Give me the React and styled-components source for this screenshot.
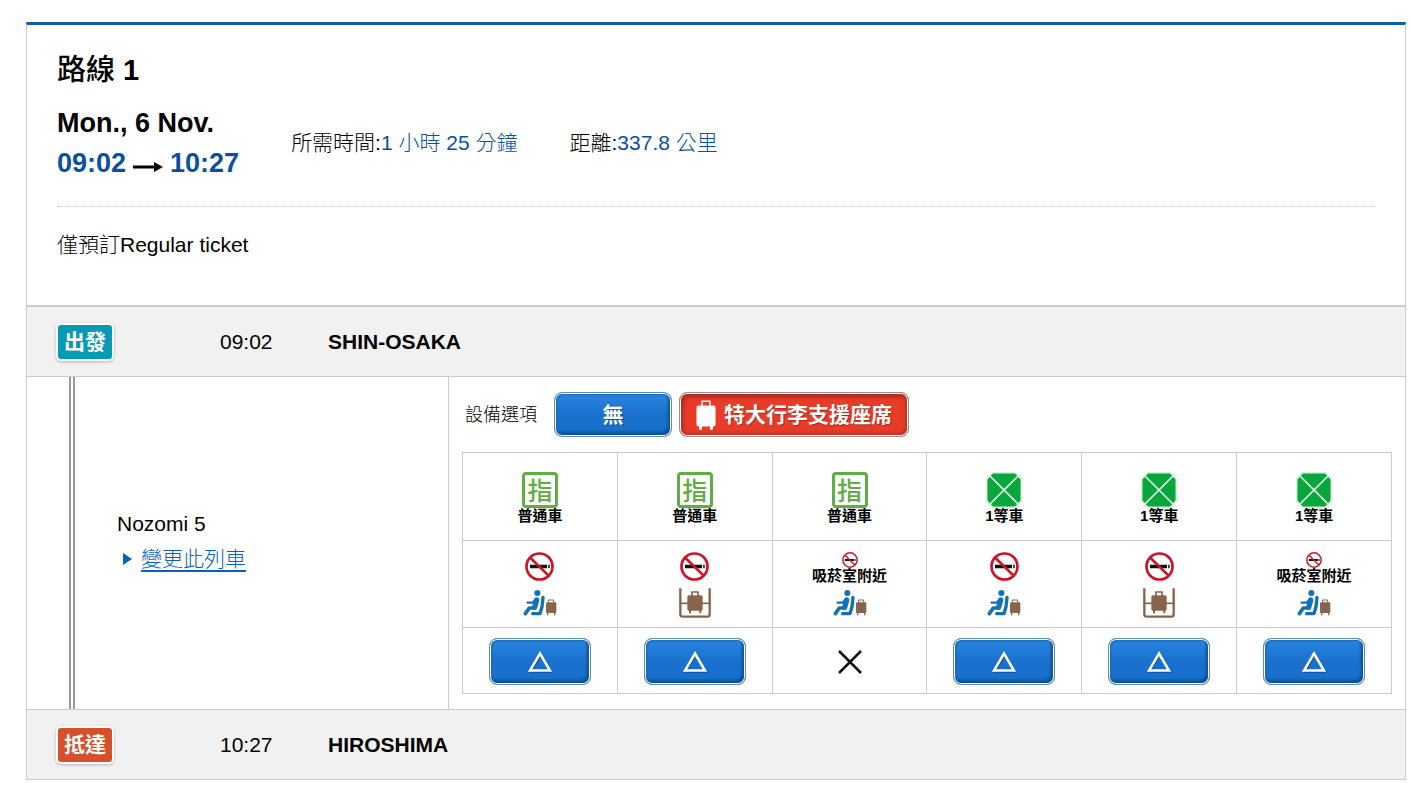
import React from 'react';
import styled, { createGlobalStyle, css } from 'styled-components';

const GlobalStyle = createGlobalStyle`
  * {
    box-sizing: border-box;
  }

  body {
    margin: 0;
    background: #fff;
    color: #000;
    font-family: "Liberation Sans", "Noto Sans CJK TC", sans-serif;
    font-size: 21px;
    font-weight: 300;
    line-height: 30px;
  }
`

const Page = styled.main`
  padding: 22px 6px 10px 26px;
`

const Panel = styled.section`
  border: 1px solid #ccc;
  border-top: 3px solid #0e5ead;
`

const Header = styled.header`
  padding: 25px 30px 45px;
  border-bottom: 2px solid #ccc;
`

const Title = styled.h1`
  margin: 0 0 13px;
  font-size: 29px;
  font-weight: 500;
  line-height: 40px;

  b {
    font-weight: 700;
  }
`

const Summary = styled.div`
  display: flex;
  align-items: center;
  gap: 52px;
  padding-bottom: 23px;
  border-bottom: 1px dotted #ccc;
`

const When = styled.div`
  font-size: 27px;
  font-weight: 700;
  line-height: 40px;
`

const Times = styled.div`
  display: flex;
  align-items: center;
  gap: 7px;
  color: #0b4f9e;

  svg {
    margin-top: 8px;
  }
`

const Stat = styled.div`
  span {
    color: #0b4f9e;
  }
`

const Note = styled.p`
  margin: 23px 0 0;
`

const StationRow = styled.div`
  display: grid;
  grid-template-columns: 164px 108px 1fr;
  align-items: center;
  height: 69px;
  padding-left: 29px;
  background: #f1f1f1;

  strong {
    font-weight: 700;
  }
`

const Badge = styled.span`
  justify-self: start;
  padding: 0 6px;
  border: 2px solid #fff;
  border-radius: 5px;
  background: ${props => props.$color};
  box-shadow: 0 1px 3px rgba(0, 0, 0, 0.25);
  color: #fff;
  font-weight: 700;
  line-height: 34px;
`

const Leg = styled.div`
  display: grid;
  grid-template-columns: 421px minmax(0, 1fr);
  border-top: 1px solid #ccc;
  border-bottom: 1px solid #ccc;
`

const Train = styled.div`
  display: flex;
  flex-direction: column;
  justify-content: center;
  margin-left: 42px;
  padding: 0 0 4px 42px;
  border-left: 6px double #999;
  line-height: 35px;
`

const ChangeLink = styled.a`
  display: flex;
  align-items: center;
  gap: 9px;
  padding-left: 6px;
  color: #0b61b8;
  text-decoration: none;

  span {
    text-decoration: underline;
    text-underline-offset: 4px;
    text-decoration-thickness: 2px;
  }
`

const Seats = styled.div`
  padding: 15px 13px;
  border-left: 1px solid #ccc;
`

const Options = styled.div`
  display: flex;
  align-items: center;
  gap: 7px;
  margin-bottom: 15px;
  padding-left: 3px;
`

const OptionsLabel = styled.span`
  margin-right: 10px;
  font-size: 18px;
`

const tones = {
  blue: css`
    border-color: #5e8db8;
    background: linear-gradient(#2b86e0, #1971cd 50%, #1870cc);
    box-shadow: inset 0 0 0 1px #fff, inset -3px -4px 3px #0d4f96, inset 2px 2px 2px #1b66b5;
  `,
  red: css`
    border-color: #a58a88;
    background: #e83c29;
    box-shadow: inset 0 0 0 1px #fff, inset 3px 4px 4px #a82a1d, inset -3px -3px 3px #bd3022;
  `,
}

const Button = styled.button`
  display: inline-flex;
  align-items: center;
  justify-content: center;
  gap: 8px;
  width: ${props => props.$width};
  height: ${props => props.$height};
  padding: 0 16px;
  border: 1px solid;
  border-radius: 8px;
  color: #fff;
  font: inherit;
  font-weight: 700;
  text-shadow: 1px 1px 1px rgba(0, 0, 0, 0.3);
  cursor: pointer;
  ${props => tones[props.$tone]}
`

const SeatTable = styled.table`
  width: 100%;
  border-collapse: collapse;
  table-layout: fixed;
`

const Cell = styled.td`
  height: ${props => props.$height};
  padding: 2px 0 0;
  border: 1px solid #ccc;
  text-align: center;
  vertical-align: middle;

  svg {
    display: block;
    flex: none;
    margin: 0 auto;
  }
`

const Caption = styled.div`
  font-size: 15px;
  font-weight: 700;
  line-height: 16px;
`

const Slot = styled.div`
  display: flex;
  flex-direction: column;
  align-items: center;
  height: 30px;

  & + & {
    margin-top: 6px;
  }
`

const Reserved = styled.div`
  display: flex;
  justify-content: center;
  width: 36px;
  height: 36px;
  margin: 0 auto;
  border: 3px solid #60ad45;
  border-radius: 4px;
  color: #60ad45;
  font-size: 25px;
  font-weight: 500;
  line-height: 32px;
`

const Arrow = () => (
  <svg width="30" height="12" viewBox="0 0 30 12" aria-hidden="true">
    <path d="M0 4.600h21V1l9 5-9 5V7.400H0z" fill="#000"/>
  </svg>
)

const Suitcase = () => (
  <svg width="20" height="30" viewBox="0 0 20 30" aria-hidden="true">
    <path d="M6 6V1.200h8V6" fill="none" stroke="#fff" strokeWidth="1.400"/>
    <rect x="0.500" y="5.500" width="19" height="21" rx="2" fill="#fff"/>
    <path d="M3 26h3v2.500a1.500 1.500 0 0 1-3 0zM14 26h3v2.500a1.500 1.500 0 0 1-3 0z" fill="#fff"/>
  </svg>
)

const GreenCar = () => (
  <svg width="36" height="36" viewBox="0 0 36 36" aria-hidden="true">
    <path d="M6 0h24l6 6v24l-6 6H6l-6-6V6z" fill="#d3f1da"/>
    <path d="M7.500 2.500h21L33.500 8v20l-5 5.500h-21L2.500 28V8z" fill="#08a63c" stroke="#08a63c" strokeWidth="2" strokeLinejoin="round"/>
    <path d="M3.500 3.500l29 29M32.500 3.500l-29 29" stroke="#e6f8ea" strokeWidth="1.700"/>
  </svg>
)

const NoSmoking = ({ size }) => (
  <svg width={size} height={size} viewBox="0 0 29 29" aria-hidden="true">
    <path d="M5 12.700h17v3.500H5zM23.200 12.700h1.500v3.500h-1.500z" fill="#111"/>
    <circle cx="14.500" cy="14.500" r="13" fill="none" stroke="#cb1527" strokeWidth="2.700"/>
    <path d="M5.500 6l18 17.500" stroke="#cb1527" strokeWidth="2.500"/>
  </svg>
)

const SeatLuggage = () => (
  <svg width="36" height="30" viewBox="-6 -6 108 90" aria-hidden="true">
    <circle cx="40" cy="9" r="9" fill="#1272b8"/>
    <g fill="none" stroke="#1272b8" strokeLinecap="round" strokeLinejoin="round">
      <path d="M57 22Q56 50 48 71H26" strokeWidth="10"/>
      <path d="M31 54H16L4 71" strokeWidth="11"/>
      <path d="M33 31L26 38H11" strokeWidth="7"/>
      <path d="M38 30L32 52" strokeWidth="16"/>
    </g>
    <g fill="#89644c">
      <rect x="66" y="37" width="31" height="32" rx="3"/>
      <path d="M69 68h4v8h-4zM90 68h4v8h-4z"/>
    </g>
    <path d="M73 38v-8h16v8" fill="none" stroke="#89644c" strokeWidth="3"/>
  </svg>
)

const LuggageRack = () => (
  <svg width="32" height="30" viewBox="0 0 96 90" aria-hidden="true">
    <g fill="none" stroke="#89644c">
      <path d="M4 1v78q0 7 7 7h74q7 0 7-7V1" strokeWidth="7"/>
      <path d="M6 46h84" strokeWidth="5"/>
      <path d="M39 24V12h18v12" strokeWidth="5"/>
    </g>
    <rect x="25" y="22" width="46" height="46" rx="5" fill="#89644c"/>
    <path d="M30 66h6v10h-6zM61 66h6v10h-6z" fill="#89644c"/>
  </svg>
)

const Triangle = () => (
  <svg width="24" height="22" viewBox="0 0 24 22" aria-hidden="true">
    <path d="M12.800 3.800L23 20.800H3z" fill="none" stroke="#0d4d92" strokeWidth="2"/>
    <path d="M12 2.500L22 19.500H2z" fill="none" stroke="#fff" strokeWidth="2.500"/>
  </svg>
)

const Cross = () => (
  <svg width="24" height="24" viewBox="0 0 24 24" aria-hidden="true">
    <path d="M1 1l22 22M23 1L1 23" stroke="#111" strokeWidth="2.500"/>
  </svg>
)

const Marker = () => (
  <svg width="9" height="12" viewBox="0 0 9 12" aria-hidden="true">
    <path d="M0 0l9 6-9 6z" fill="#0b61b8"/>
  </svg>
)

const seats = [
  { id: 1, green: false, nearSmoking: false, rack: false, open: true },
  { id: 2, green: false, nearSmoking: false, rack: true, open: true },
  { id: 3, green: false, nearSmoking: true, rack: false, open: false },
  { id: 4, green: true, nearSmoking: false, rack: false, open: true },
  { id: 5, green: true, nearSmoking: false, rack: true, open: true },
  { id: 6, green: true, nearSmoking: true, rack: false, open: true },
]

const Station = ({ label, color, time, name }) => (
  <StationRow>
    <Badge $color={color}>{label}</Badge>
    <span>{time}</span>
    <strong>{name}</strong>
  </StationRow>
)

const App = () => {
  return (
    <Page>
      <GlobalStyle/>
      <Panel>
        <Header>
          <Title>路線 <b>1</b></Title>
          <Summary>
            <When>
              <div>Mon., 6 Nov.</div>
              <Times>09:02<Arrow/>10:27</Times>
            </When>
            <Stat>所需時間:<span>1 小時 25 分鐘</span></Stat>
            <Stat>距離:<span>337.8 公里</span></Stat>
          </Summary>
          <Note>僅預訂Regular ticket</Note>
        </Header>
        <Station label={'出發'} color={'#0799b6'} time={'09:02'} name={'SHIN-OSAKA'}/>
        <Leg>
          <Train>
            <div>Nozomi 5</div>
            <ChangeLink href={'#change'}>
              <Marker/>
              <span>變更此列車</span>
            </ChangeLink>
          </Train>
          <Seats>
            <Options>
              <OptionsLabel>設備選項</OptionsLabel>
              <Button type="button" $tone="blue" $width="118px" $height="45px">無</Button>
              <Button type="button" $tone="red" $height="45px">
                <Suitcase/>特大行李支援座席
              </Button>
            </Options>
            <SeatTable>
              <tbody>
                <tr>
                  {seats.map(seat => (
                    <Cell key={seat.id} $height="88px">
                      {seat.green ? <GreenCar/> : <Reserved>指</Reserved>}
                      <Caption>{seat.green ? '1等車' : '普通車'}</Caption>
                    </Cell>
                  ))}
                </tr>
                <tr>
                  {seats.map(seat => (
                    <Cell key={seat.id} $height="87px">
                      <Slot>
                        <NoSmoking size={seat.nearSmoking ? 16 : 29}/>
                        {seat.nearSmoking && <Caption>吸菸室附近</Caption>}
                      </Slot>
                      <Slot>{seat.rack ? <LuggageRack/> : <SeatLuggage/>}</Slot>
                    </Cell>
                  ))}
                </tr>
                <tr>
                  {seats.map(seat => (
                    <Cell key={seat.id} $height="66px">
                      {seat.open
                        ? <Button type="button" aria-label="△" $tone="blue" $width="102px" $height="47px"><Triangle/></Button>
                        : <Cross/>}
                    </Cell>
                  ))}
                </tr>
              </tbody>
            </SeatTable>
          </Seats>
        </Leg>
        <Station label={'抵達'} color={'#d6502b'} time={'10:27'} name={'HIROSHIMA'}/>
      </Panel>
    </Page>
  )
}

export default App;
